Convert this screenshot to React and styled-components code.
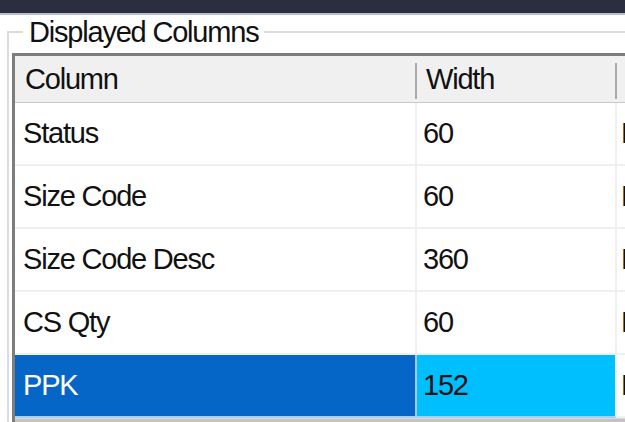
import React from 'react';
import styled, { createGlobalStyle, css } from 'styled-components';

const GlobalStyle = createGlobalStyle`
  html, body {
    margin: 0;
    padding: 0;
    background: #ffffff;
    overflow: hidden;
  }
  body {
    width: 625px;
    height: 422px;
    font-family: "Liberation Sans", Arial, sans-serif;
  }
`;

const Window = styled.div`
  width: 625px;
  height: 422px;
  overflow: hidden;
  background: #ffffff;
`;

const TitleStrip = styled.div`
  height: 13px;
  background: #2b2e40;
  border-bottom: 2px solid #b9bdcc;
`;

const GroupBox = styled.fieldset`
  margin: 3px 0 0 7px;
  padding: 0 0 0 3px;
  border: none;
  border-top: 2px solid #dcdcdc;
  border-left: 2px solid #dcdcdc;
  min-width: 0;
`;

const Legend = styled.legend`
  margin-left: 11px;
  padding: 0 6px;
  font-size: 29px;
  line-height: 28px;
  letter-spacing: -1.2px;
  color: #111111;
`;

const Grid = styled.div`
  margin-top: 7px;
  width: 820px;
  border-top: 3px solid #7d7d7d;
  border-left: 3px solid #7d7d7d;
  box-shadow: inset 1px 1px 0 #5c5c5c;
  background: #ffffff;
`;

const Row = styled.div`
  display: grid;
  grid-template-columns: 402px 200px 200px;
`;

const HeaderCell = styled.div`
  position: relative;
  height: 46px;
  display: flex;
  align-items: center;
  padding-left: ${({ $pad }) => $pad}px;
  background: #f0f0f0;
  border-bottom: 1px solid #c9c9c9;
  font-size: 29px;
  letter-spacing: -1.2px;
  color: #111111;

  &::after {
    content: '';
    position: absolute;
    right: 0;
    top: 7px;
    bottom: 3px;
    width: 2px;
    background: #a9a9a9;
  }
`;

const Cell = styled.div`
  height: 61px;
  display: flex;
  align-items: center;
  padding-left: ${({ $pad }) => $pad}px;
  border-right: 2px solid #f0f0f0;
  border-bottom: 2px solid #f0f0f0;
  font-size: 29px;
  letter-spacing: -1.2px;
  color: #111111;
  background: #ffffff;
  white-space: nowrap;
  overflow: hidden;

  ${({ $state }) =>
    $state === 'selected' &&
    css`
      background: #0566c8;
      color: #ffffff;
      border-right-color: #a8c8ec;
      border-bottom-color: #a8d0f5;
    `}
  ${({ $state }) =>
    $state === 'current' &&
    css`
      background: #00bfff;
      color: #111111;
      border-right-color: #f4f4f4;
      border-bottom-color: #a8d0f5;
    `}
`;

const ScrollStrip = styled.div`
  height: 8px;
  background: #c3c3c3;
  border-top: 1px solid #dadada;
`;

const columns = [
  { title: 'Column', headPad: 10, cellPad: 8 },
  { title: 'Width', headPad: 9, cellPad: 6 },
  { title: 'Alignment', headPad: 11, cellPad: 4 }
];

const rows = [
  ['Status', '60', 'Left'],
  ['Size Code', '60', 'Left'],
  ['Size Code Desc', '360', 'Left'],
  ['CS Qty', '60', 'Left'],
  ['PPK', '152', 'Left']
];

const selectedRow = 4;

function cellState(i, j) {
  if (i !== selectedRow) return undefined;
  if (j === 0) return 'selected';
  if (j === 1) return 'current';
  return undefined;
}

function App() {
  return (
    <Window>
      <GlobalStyle />
      <TitleStrip />
      <GroupBox>
        <Legend>Displayed Columns</Legend>
        <Grid>
          <Row>
            {columns.map((col) => (
              <HeaderCell key={col.title} $pad={col.headPad}>
                {col.title}
              </HeaderCell>
            ))}
          </Row>
          {rows.map((row, i) => (
            <Row key={row[0]}>
              {row.map((value, j) => (
                <Cell key={j} $pad={columns[j].cellPad} $state={cellState(i, j)}>
                  {value}
                </Cell>
              ))}
            </Row>
          ))}
          <ScrollStrip />
        </Grid>
      </GroupBox>
    </Window>
  );
}

export default App;
